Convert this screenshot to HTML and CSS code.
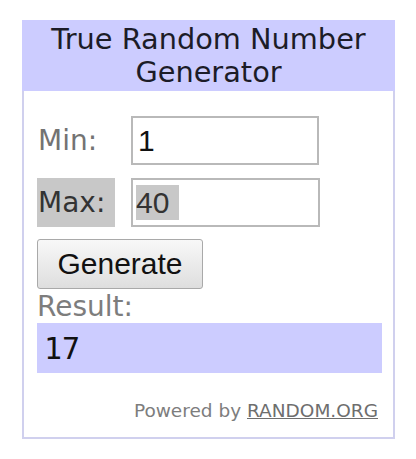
FILE: index.html
```html
<!DOCTYPE html>
<html lang="en">
<head>
    <meta charset="UTF-8">
    <meta name="viewport" content="width=device-width, initial-scale=1.0">
    <title>True Random Number Generator</title>
    <link rel="stylesheet" href="styles.css">
</head>
<body>
    <div class="rng-widget">
        <div class="rng-title">True Random Number Generator</div>

        <div class="rng-body">
            <div class="rng-row">
                <span class="rng-label">Min:</span>
                <div class="rng-field">1</div>
            </div>
            <div class="rng-row">
                <span class="rng-label selected">Max: </span>
                <div class="rng-field"><span class="selected pad">40</span></div>
            </div>

            <button class="rng-btn" type="button">Generate</button>

            <div class="rng-result-label">Result:</div>
            <div class="rng-result">17</div>

            <div class="rng-powered">Powered by <a href="#">RANDOM.ORG</a></div>
        </div>
    </div>
</body>
</html>
```

FILE: styles.css
```css
body {
    margin: 0;
    background: #fff;
    font-family: "DejaVu Sans", Verdana, sans-serif;
}

.rng-widget {
    box-sizing: border-box;
    width: 373px;
    margin: 20px 0 0 22px;
    border: 2px solid #d0d0ee;
    border-top: 0;
}

.rng-title {
    background: #ccccff;
    color: #1c1c28;
    font-size: 28.8px;
    line-height: 33px;
    text-align: center;
    padding: 3px 16px 2px;
    margin: 0 -2px;
}

.rng-body {
    padding: 25px 11px 16px 13px;
}

.rng-row {
    display: flex;
    align-items: center;
    margin-bottom: 13px;
}

.rng-row:first-child + .rng-row {
    margin-bottom: 12px;
}

.rng-label {
    box-sizing: border-box;
    width: 78px;
    height: 49px;
    line-height: 49px;
    margin-right: 16px;
    padding-left: 1px;
    font-size: 28px;
    color: #737373;
    white-space: pre;
}

.rng-label.selected {
    color: #333;
}

.selected {
    background: #c8c8c8;
}

.rng-field {
    box-sizing: border-box;
    width: 188px;
    height: 49px;
    border: 2px solid #b9b9b9;
    padding: 0 5px;
    font-family: "Liberation Sans", Arial, sans-serif;
    font-size: 30px;
    line-height: 45px;
    color: #111;
}

.rng-row + .rng-row .rng-field {
    width: 189px;
    padding-left: 3px;
    color: #333;
}

.pad {
    display: inline-block;
    line-height: 35px;
    padding-right: 10px;
}

.rng-btn {
    display: block;
    box-sizing: border-box;
    width: 166px;
    height: 50px;
    border: 1px solid #a9a9a9;
    border-radius: 3px;
    background: linear-gradient(#f8f8f8, #dedede);
    font-family: "Liberation Sans", Arial, sans-serif;
    font-size: 30px;
    color: #111;
    padding: 0;
}

.rng-result-label {
    margin-top: 2px;
    font-size: 28px;
    line-height: 32px;
    color: #7d7d7d;
}

.rng-result {
    box-sizing: border-box;
    height: 50px;
    padding: 2px 7px 0;
    background: #ccccff;
    font-family: "DejaVu Sans Mono", monospace;
    font-size: 30px;
    line-height: 48px;
    color: #111;
}

.rng-powered {
    margin-top: 27px;
    margin-right: 4px;
    text-align: right;
    font-size: 18.5px;
    color: #7d7d7d;
}

.rng-powered a {
    color: #6e6e6e;
    text-decoration: underline;
}
```
